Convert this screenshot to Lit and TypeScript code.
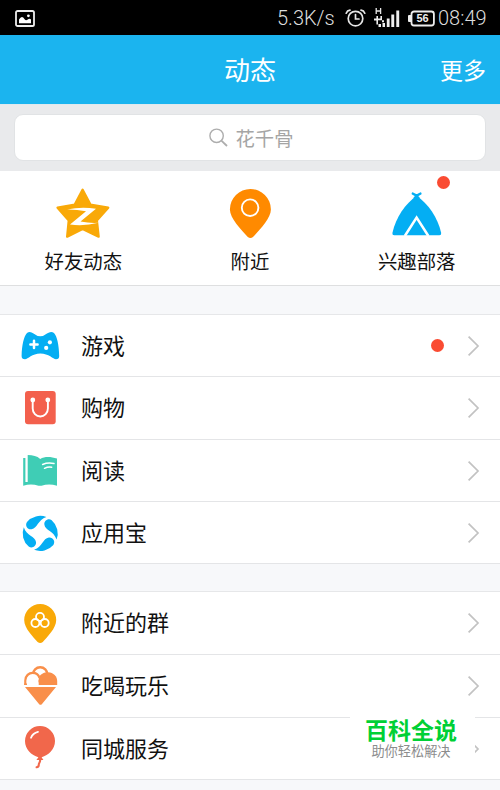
import { LitElement, html, css, svg, TemplateResult } from "lit";
import { customElement } from "lit/decorators.js";

const ICONS: Record<string, TemplateResult> = {
  game: svg`<path fill="#04aef3" d="M7 10Q10 7.6 13.5 10.5Q20.3 16 27 10.5Q31 7.6 34 10C37 13 39 22 39.2 33Q39.2 36.3 36 36.3C33 36.3 29 30.6 20.3 30.6C12 30.6 8 36.3 5 36.3Q1.6 36.3 1.6 33C1.8 22 4 13 7 10Z"/>
    <path stroke="#fff" stroke-width="2.5" stroke-linecap="round" d="M10.4 21.4H17.6M14 17.8V25"/>
    <circle cx="29.9" cy="19.3" r="2.1" fill="#fff"/><circle cx="26.2" cy="24.9" r="2.1" fill="#fff"/>`,
  shop: svg`<rect x="5" y="6" width="30.7" height="33.3" rx="3" fill="#f3604d"/>
    <path fill="none" stroke="#fff" stroke-width="1.9" d="M12.7 15V23.5a7.6 8 0 0 0 15.2 0V15"/>
    <circle cx="12.8" cy="15" r="2.4" fill="#fff"/><circle cx="27.8" cy="15" r="2.4" fill="#fff"/>`,
  read: svg`<path fill="#3fcdb5" d="M3.2 10H5.4V34H7.7V7C13 7 17 8 20.2 11C25 8.2 31 8.8 37 10.6V37.8Q29 35.4 21.5 37.8H18.5Q11 35.4 3.2 37.8Z"/>
    <path fill="none" stroke="#fff" stroke-width="1.5" stroke-linecap="round" d="M22.6 16.5Q28 14.2 34 15.6M24.5 20.3Q28 18.6 31.7 19.2"/>`,
  app: svg`<g transform="translate(20.2 23.4)" fill="#04aef3">${[0, 90, 180, 270].map(
    (a) => svg`<path transform="rotate(${a})" d="M6.2 -16.4A17.5 17.5 0 0 0 -13.2 -11.5C-15.6 -8 -12.6 -3.6 -8.6 -4.2C-2.6 -5 -2.6 -13.6 6.2 -16.4Z"/>`
  )}</g>`,
  group: svg`<path fill="#f9a908" d="M20.2 4A16 16 0 0 1 36.2 20C36.2 28.5 27 37 22.8 42Q20.2 44.2 17.6 42C13.4 37 4.2 28.5 4.2 20A16 16 0 0 1 20.2 4Z"/>
    <g fill="none" stroke="#fff" stroke-width="1.8"><circle cx="20" cy="16.9" r="4"/><circle cx="15.4" cy="23" r="4"/><circle cx="24.7" cy="23" r="4"/></g>`,
  food: svg`<circle cx="20.2" cy="11.4" r="7.2" fill="#fff" stroke="#f98f4a" stroke-width="2.4"/>
    <path fill="#f98f4a" d="M18.5 22V15C20 11 24 9.2 28 9.2C33.5 9.4 37.2 13.5 37.2 18V22Z"/>
    <path fill="#fff" stroke="#f98f4a" stroke-width="2.4" d="M5.4 22V17.5C5.4 12.4 9 9.9 12.6 9.9C16 9.9 18.6 11.8 19.4 14.8"/>
    <path fill="#fff" d="M6.6 22V18C6.6 14.4 9.3 12 12.8 12Q17 12 18.4 15.6V22Z"/>
    <path fill="#f98f4a" d="M4.2 20.4H7V22H4.2ZM5 24H36L21.8 41.2Q20.5 42.4 19.2 41.2Z"/>`,
  city: svg`<path fill="#f1674b" d="M20 0A15 15 0 0 1 35 15C35 23 28.5 29.5 21.6 31.2L23.4 34H16.4L18.4 31.2C11.5 29.5 5 23 5 15A15 15 0 0 1 20 0Z"/>
    <path fill="none" stroke="#f1674b" stroke-width="2.1" stroke-linecap="round" d="M20 33C20.8 36.6 18.6 36.6 18.8 38.8Q18.8 41 16.6 41.3"/>
    <path fill="none" stroke="#fff" stroke-width="1.8" stroke-linecap="round" d="M11 11.7Q12.8 7 18 5.8"/>`,
  star: svg`<path fill="#f9a908" stroke="#f9a908" stroke-width="2.4" stroke-linejoin="round" d="M29.6 4.8L37.4 19.6L55.2 22.6L43.8 35.4L45.6 51.6L29.6 44L14.2 51.6L15.8 35.4L4.6 22.6L21.8 19.6Z"/>
    <path fill="#fff" d="M14 24.4Q29 21.2 43 23.8L27.5 36.6Q37 38.4 45.5 37.8Q31 41.6 17 39.6L33 26.2Q23 24.2 14 24.4Z"/>`,
  near: svg`<path fill="#ff8a00" d="M30.4 4A20.5 20.5 0 0 1 50.9 24.4C50.9 33 40 44.5 33 52Q30.4 54.2 27.8 52C21 44.5 9.9 33 9.9 24.4A20.5 20.5 0 0 1 30.4 4Z"/>
    <circle cx="30.1" cy="22.7" r="8.3" fill="none" stroke="#fff" stroke-width="1.9"/>`,
  tent: svg`<path fill="none" stroke="#04aef3" stroke-width="2.4" stroke-linecap="round" d="M25.8 8.6Q29 9.6 31.5 13M33.4 8.6Q30.2 9.6 27.7 13"/>
    <path fill="#04aef3" d="M29.6 11C41 18.5 50.5 32 54.2 48Q54.5 50.3 52.4 50.3H7.2Q5.1 50.3 5.4 48C9 32 18.5 18.5 29.6 11Z"/>
    <path fill="none" stroke="#fff" stroke-width="2.5" d="M17.8 51L29.6 32.5L41.4 51"/>`,
};

interface Row { icon: string; label: string; dot?: boolean; tall?: boolean }

const GROUPS: Row[][] = [
  [
    { icon: "game", label: "游戏", dot: true },
    { icon: "shop", label: "购物", tall: true },
    { icon: "read", label: "阅读" },
    { icon: "app", label: "应用宝" },
  ],
  [
    { icon: "group", label: "附近的群", tall: true },
    { icon: "food", label: "吃喝玩乐", tall: true },
    { icon: "city", label: "同城服务" },
  ],
];

@customElement("app-root")
export class AppRoot extends LitElement {
  static styles = css`
    :host { display: block; position: relative; width: 500px; height: 790px; overflow: hidden; background: #f7f8fa; color: #111; font-family: "Noto Sans CJK SC", sans-serif; }
    * { box-sizing: border-box; }
    svg { display: block; flex: none; }
    .status { height: 35px; background: #000; color: #ddd; display: flex; align-items: center; padding: 1px 9px 0 15px; font: 300 20px/1 Roboto, sans-serif; }
    .speed { margin-left: auto; margin-right: 10px; width: 58px; white-space: nowrap; }
    .alarm { margin-right: 8px; }
    .signal { margin-right: 8px; }
    .clock { margin-left: 3px; width: 53px; white-space: nowrap; }
    .battery { font: bold 11px "Liberation Sans", sans-serif; }
    .header { height: 69px; background: #1bb4ef; color: #fff; display: grid; grid-template-columns: 1fr auto 1fr; align-items: center; padding: 0 14px 2px; }
    .title { grid-column: 2; font-size: 26px; line-height: 38px; }
    .more { justify-self: end; font-size: 23px; line-height: 34px; }
    .search { height: 67px; background: #e9eaec; padding: 9px 14px 0; border-top: 1px solid #dfe9ee; }
    .field { height: 47px; background: #fff; border: 1px solid #e1e3e5; border-radius: 9px; display: flex; justify-content: center; align-items: center; gap: 8px; color: #a5a5a5; font-size: 19.3px; padding-left: 2px; }
    .quick { height: 115px; background: #fff; border-bottom: 1px solid #dedfe0; display: grid; grid-template-columns: repeat(3, 1fr); }
    .entry { position: relative; display: flex; flex-direction: column; align-items: center; padding-top: 14px; font-size: 19.4px; line-height: 28px; }
    .entry span { margin-top: 6px; }
    .dot { width: 13px; height: 13px; border-radius: 50%; background: #fa4b32; }
    .badge { position: absolute; left: 104px; top: 5px; }
    .group { margin-top: 28px; border-top: 1px solid #e6e7e9; background: #fff; }
    .group + .group { margin-top: 27px; }
    .row { height: 62px; display: flex; align-items: center; border-bottom: 1px solid #e4e5e7; padding: 0 20px; }
    .tall { height: 63px; }
    .icon { align-self: flex-start; margin-top: 8px; overflow: visible; }
    .label { margin-left: 21px; padding-bottom: 4px; font-size: 22px; line-height: 32px; flex: 1; }
    .row .dot { margin-right: 23px; }
    .mark { position: absolute; left: 350px; top: 712px; width: 125px; height: 64px; background: #fff; text-align: center; padding: 5px 3px 0 0; }
    .name { color: #00d035; font-size: 23px; line-height: 24px; font-weight: 700; }
    .slogan { color: #8c8c8c; font-size: 13.2px; line-height: 18px; margin-top: 1px; }
  `;

  private row(r: Row) {
    return html`<div class="row ${r.tall ? "tall" : ""}">
      <svg class="icon" width="40" height="45" viewBox="0 0 40 45">${ICONS[r.icon]}</svg>
      <span class="label">${r.label}</span>
      ${r.dot ? html`<i class="dot"></i>` : ""}
      <svg width="13" height="22" viewBox="0 0 13 22"><path d="M1.6 1.6L11 11L1.6 20.4" fill="none" stroke="#c2c2c2" stroke-width="1.7"/></svg>
    </div>`;
  }

  private entry(icon: string, label: string, dot = false) {
    return html`<div class="entry">
      <svg width="60" height="56" viewBox="0 0 60 56">${ICONS[icon]}</svg>
      <span>${label}</span>${dot ? html`<i class="dot badge"></i>` : ""}
    </div>`;
  }

  render() {
    return html`
      <div class="status">
        <svg width="20" height="17" viewBox="0 0 20 17"><rect x="1" y="1" width="18" height="15" rx="1.6" fill="none" stroke="#eee" stroke-width="1.8"/><path fill="#fff" d="M4 13.2V9.6Q6.8 4.8 9.6 9.2Q10.8 11 12.4 9.8Q14.6 8 16 9.6V13.2Z"/><circle cx="13.4" cy="5.8" r="1.4" fill="#fff"/></svg>
        <span class="speed">5.3K/s</span>
        <svg class="alarm" width="21" height="18" viewBox="0 0 21 18"><g fill="none" stroke="#e6e6e6" stroke-width="1.7" stroke-linecap="round"><circle cx="10.5" cy="9.6" r="7.3"/><path d="M10.5 5.5V10H14M1.2 4.2Q2.2 1.6 5 1.2M19.8 4.2Q18.8 1.6 16 1.2"/></g></svg>
        <svg class="signal" width="26" height="20" viewBox="0 0 26 20"><path d="M2.2 0V6M6.6 0V6M2.2 3H6.6" stroke="#e6e6e6" stroke-width="1.3"/><path fill="#eee" d="M2.4 8H4V10.6H6.4V8H8V12.2H10V14.2H8V12.2H4V16.4H2.4V12.4H0V10.6H2.4ZM8.5 15H11V19H8.5ZM4.5 16H7V19H4.5ZM12.8 10.5H15.6V19H12.8ZM17.3 6.5H20.2V19H17.3ZM22.3 2.5H25.2V19H22.3Z"/></svg>
        <svg class="battery" width="27" height="17" viewBox="0 0 27 17"><rect x="3.5" y="1.5" width="22.4" height="14" rx="2.5" fill="none" stroke="#eee" stroke-width="1.8"/><rect x="0" y="5" width="4" height="7" rx="1" fill="#eee"/><text x="14.6" y="12.4" text-anchor="middle" fill="#eee">56</text></svg>
        <span class="clock">08:49</span>
      </div>
      <div class="header"><span class="title">动态</span><span class="more">更多</span></div>
      <div class="search"><div class="field">
        <svg width="19" height="19" viewBox="0 0 19 19"><g fill="none" stroke="#adadad" stroke-width="1.4"><circle cx="7.6" cy="7.8" r="6.7"/><path d="M12.4 12.6L18 18" stroke-width="1.8"/></g></svg>
        <span>花千骨</span>
      </div></div>
      <div class="quick">${this.entry("star", "好友动态")}${this.entry("near", "附近")}${this.entry("tent", "兴趣部落", true)}</div>
      ${GROUPS.map((g) => html`<div class="group">${g.map((r) => this.row(r))}</div>`)}
      <div class="mark"><div class="name">百科全说</div><div class="slogan">助你轻松解决</div></div>
    `;
  }
}
